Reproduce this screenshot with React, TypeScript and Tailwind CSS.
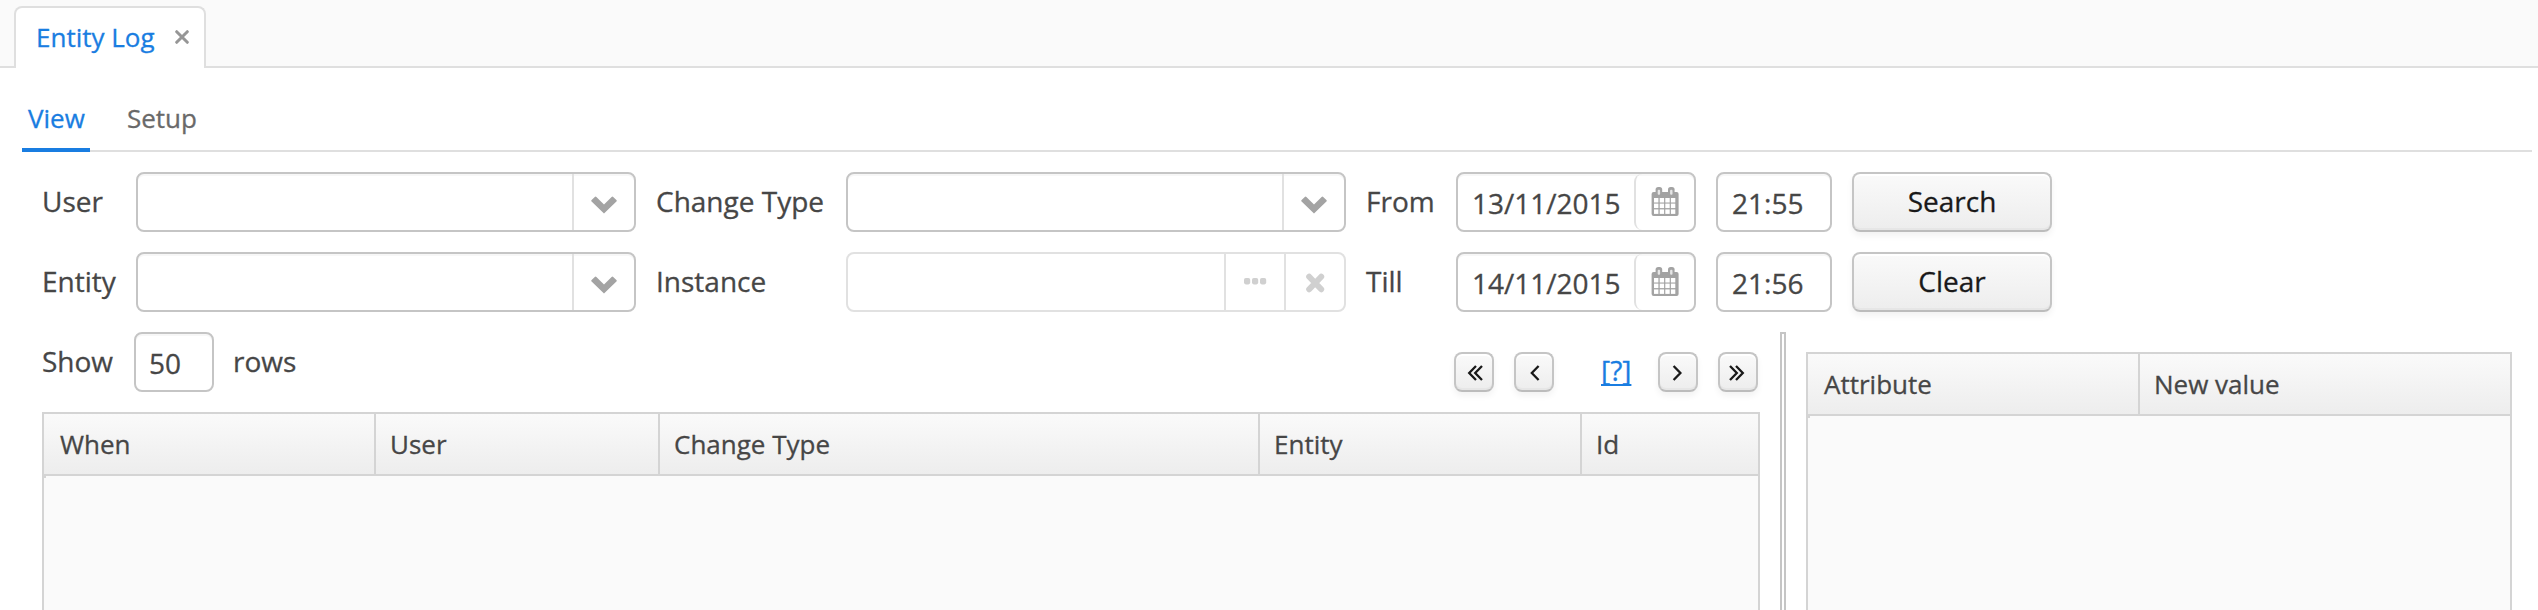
import React from "react";

function CalendarIcon() {
  return (
    <svg width="28" height="30" viewBox="0 0 28 30" className="block">
      <rect x="0.6" y="5" width="27" height="24" rx="2" fill="#a3a3a3" />
      {[11, 16.6, 22.4].map((y) => [3, 8.7, 14.3, 19.9].map((x) => <rect key={`${x}-${y}`} x={x} y={y} width="4.4" height="4.5" fill="#fff" />))}
      {[4.6, 17].map((x) => (
        <g key={x}>
          <rect x={x} y="0" width="6.6" height="9" rx="2.6" fill="#a3a3a3" />
          <rect x={x + 2.1} y="2.8" width="2.4" height="5" rx="1" fill="#e6e6e6" />
        </g>
      ))}
    </svg>
  );
}

function ChevronDown() {
  return (
    <svg width="26" height="18" viewBox="0 0 26 18" className="block">
      <path d="M13 17.4 L0.6 5.6 Q-0.2 4.8 .6 4 L3.8 0.9 Q4.6 .2 5.4 0.9 L13 8.4 L20.6 0.9 Q21.4 .2 22.2 .9 L25.4 4 Q26.2 4.8 25.4 5.6 Z" fill="#a3a3a3" />
    </svg>
  );
}

const field = "flex h-[60px] rounded-lg border-2 border-[#c5c5c5] bg-white shadow-[inset_0_2px_0_#f7f7f7]";
const button = "flex items-center justify-center rounded-lg border-2 border-[#c5c5c5] border-b-[#bcbcbc] bg-linear-to-b from-[#fafafa] to-[#ededed] text-[#191919] shadow-[inset_0_2px_0_#ffffff,inset_0_-2px_0_#e6e6e6,0_4px_6px_rgba(0,0,0,0.05)]";

function Combo() {
  return (
    <div className={`${field} w-[500px]`}>
      <div className="flex-1" />
      <div className="flex w-[62px] items-center justify-center border-l-2 border-[#e1e1e1] pt-[5px]">
        <ChevronDown />
      </div>
    </div>
  );
}

function DateField({ value }: { value: string }) {
  return (
    <div className={`${field} w-[240px]`}>
      <div className="w-[176px] pt-0.5 pl-3.5 leading-[54px]">{value}</div>
      <div className="w-[60px] rounded-l-lg border-l-2 border-[#e1e1e1] pt-[13px] pl-[15px]">
        <CalendarIcon />
      </div>
    </div>
  );
}

function Label({ children, className }: { children: React.ReactNode; className: string }) {
  return <div className={`h-[60px] leading-[58px] whitespace-nowrap ${className}`}>{children}</div>;
}

function FilterRow({ left, middle, right, date, time, action, disabled }: {
  left: string; middle: string; right: string; date: string; time: string; action: string; disabled?: boolean;
}) {
  return (
    <div className="flex">
      <Label className="w-[94px]">{left}</Label>
      <Combo />
      <Label className="ml-5 w-[190px]">{middle}</Label>
      {disabled ? (
        <div className="flex h-[60px] w-[500px] rounded-lg border-2 border-[#e1e1e1] bg-white">
          <div className="flex-1" />
          <div className="w-[60px] border-l-2 border-[#e1e1e1] pt-6 pl-[18px]">
            <svg width="24" height="7" viewBox="0 0 24 7" fill="#d0d0d0" className="block">
              <rect width="6.2" height="6.4" rx="1.8" />
              <rect x="8" width="6.2" height="6.4" rx="1.8" />
              <rect x="16" width="6.2" height="6.4" rx="1.8" />
            </svg>
          </div>
          <div className="w-[60px] border-l-2 border-[#e1e1e1] pt-[19px] pl-[20px]">
            <svg width="19" height="20" viewBox="0 0 19 20" fill="none" stroke="#d0d0d0" strokeWidth="6" strokeLinecap="round" className="block">
              <path d="M3.2 3.7 15.2 16.3M15.2 3.7 3.2 16.3" />
            </svg>
          </div>
        </div>
      ) : (
        <Combo />
      )}
      <Label className="ml-5 w-[90px]">{right}</Label>
      <DateField value={date} />
      <div className={`${field} ml-5 w-[116px] pt-0.5 pl-3.5 leading-[54px]`}>{time}</div>
      <button className={`${button} ml-5 h-[60px] w-[200px] pb-[3px]`}>{action}</button>
    </div>
  );
}

function PagerButton({ d, className = "" }: { d: string; className?: string }) {
  return (
    <button className={`${button} size-10 ${className}`}>
      <svg width="36" height="36" viewBox="0 0 36 36" fill="none" stroke="#191919" strokeWidth="2.3" className="shrink-0">
        <path d={d} />
      </svg>
    </button>
  );
}

function Grid({ columns }: { columns: { name: string; width: string }[] }) {
  return (
    <div className="flex flex-1 flex-col border-2 border-b-0 border-[#d4d4d4] bg-[#fafafa] text-[26px]">
      <div className="flex h-[62px] border-b-2 border-[#d4d4d4] bg-linear-to-b from-[#fafafa] to-[#ededed]">
        {columns.map((c) => (
          <div key={c.name} className={`${c.width} border-r-2 border-[#d4d4d4] pl-3.5 leading-[60px] first:pl-4 last:border-r-0`}>{c.name}</div>
        ))}
      </div>
      <div className="size-0.5 bg-[#d4d4d4]" />
    </div>
  );
}

export default function App() {
  return (
    <div className="flex h-[610px] w-[2538px] flex-col overflow-hidden bg-white font-['Open_Sans',sans-serif] text-[28px] text-[#464646] [-webkit-text-stroke:0.3px_currentColor]">
      <div className="flex h-[68px] shrink-0 items-end bg-[#fafafa] text-[26px]">
        <div className="w-3.5 self-stretch border-b-2 border-[#dfdfdf]" />
        <div className="flex h-[62px] w-[192px] rounded-t-lg border-2 border-b-0 border-[#dfdfdf] bg-white pl-5 leading-[58px] text-[#197de1]">
          <span className="w-[139px] whitespace-nowrap">Entity Log</span>
          <svg width="14" height="14" viewBox="0 0 14 14" fill="none" stroke="#969696" strokeWidth="3" strokeLinecap="round" className="mt-[22px]">
            <path d="M1.7 1.7 12.3 12.3M12.3 1.7 1.7 12.3" />
          </svg>
        </div>
        <div className="flex-1 self-stretch border-b-2 border-[#dfdfdf]" />
      </div>
      <div className="mr-1.5 ml-[22px] flex h-[84px] shrink-0 text-[26px] leading-[60px]">
        <div className="w-[68px] border-b-4 border-[#197de1] pt-5 pl-1.5 text-[#197de1]">View</div>
        <div className="flex-1 border-b-2 border-[#dfdfdf] pt-5 pl-[37px] text-[#696969]">Setup</div>
      </div>
      <div className="flex flex-col gap-5 pt-5 pl-[42px]">
        <FilterRow left="User" middle="Change Type" right="From" date="13/11/2015" time="21:55" action="Search" />
        <FilterRow left="Entity" middle="Instance" right="Till" date="14/11/2015" time="21:56" action="Clear" disabled />
      </div>
      <div className="flex flex-1 pt-5 pr-[26px] pl-[42px]">
        <div className="flex w-[1718px] flex-col">
          <div className="flex h-20">
            <Label className="w-[92px]">Show</Label>
            <div className={`${field} w-20 pt-0.5 pl-[13px] leading-[54px]`}>50</div>
            <Label className="ml-[19px]">rows</Label>
            <div className="mr-0.5 ml-auto flex pt-5">
              <PagerButton d="M20 12 13.2 19 20 26M26 12 19.2 19 26 26" />
              <PagerButton className="ml-5" d="M22.6 12 15.8 19 22.6 26" />
              <a className="ml-[47px] w-[57px] leading-[36px] text-[#197de1] underline decoration-2 underline-offset-[3px] [text-decoration-skip-ink:none]">[?]</a>
              <PagerButton d="M13.6 12 20.4 19 13.6 26" />
              <PagerButton className="ml-5" d="M10 12 16.8 19 10 26M16 12 22.8 19 16 26" />
            </div>
          </div>
          <Grid columns={[
            { name: "When", width: "w-[332px]" },
            { name: "User", width: "w-[284px]" },
            { name: "Change Type", width: "w-[600px]" },
            { name: "Entity", width: "w-[322px]" },
            { name: "Id", width: "flex-1" },
          ]} />
        </div>
        <div className="ml-5 w-1.5 border-2 border-b-0 border-[#c5c5c5]" />
        <div className="ml-5 flex flex-1 flex-col pt-5">
          <Grid columns={[{ name: "Attribute", width: "w-[332px]" }, { name: "New value", width: "flex-1" }]} />
        </div>
      </div>
    </div>
  );
}
